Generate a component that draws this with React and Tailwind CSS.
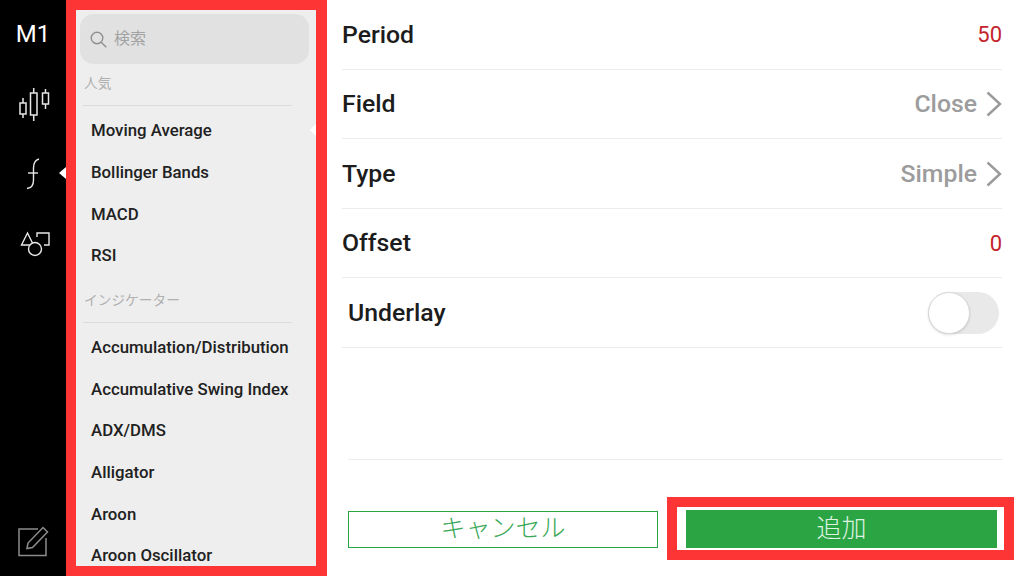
import React from 'react';

const popular = ['Moving Average', 'Bollinger Bands', 'MACD', 'RSI'];
const indicators = [
  'Accumulation/Distribution',
  'Accumulative Swing Index',
  'ADX/DMS',
  'Alligator',
  'Aroon',
  'Aroon Oscillator',
];

function Chevron() {
  return (
    <svg className="w-[16px] h-[26px] ml-[9px]" viewBox="0 0 16 26" fill="none" stroke="#9a9a9a" strokeWidth="2.4">
      <path d="M1.5 1.5 L14 13 L1.5 24.5" />
    </svg>
  );
}

function Row({ label, children }) {
  return (
    <div className="flex items-center justify-between h-[69.5px] pt-[0.5px] border-b border-[#ececec] text-[24.8px] font-medium text-[#1c1c1c]">
      <span>{label}</span>
      {children}
    </div>
  );
}

function MenuItem({ label }) {
  return <div className="flex items-center h-[41.7px] pl-[11px] text-[16.8px] font-medium text-[#212121] whitespace-nowrap">{label}</div>;
}

function Section({ label, children }) {
  return (
    <>
      <div className="mr-[24px] ml-[3px] h-[31px] flex items-center border-b border-[#dcdcdc] text-[13.7px] text-[#b0b0b0] box-content pb-[6px] mb-[4px]">
        <span className="pl-[1px]">{label}</span>
      </div>
      {children}
    </>
  );
}

function Sidebar() {
  return (
    <div className="w-[66px] h-full bg-black flex flex-col items-center relative text-white shrink-0">
      <div className="mt-[20px] text-[24px] leading-[28px] text-white">M1</div>
      <svg className="mt-[40px] ml-[2px] w-[32px] h-[34px]" viewBox="0 0 32 34" fill="none" stroke="#e8e8e8" strokeWidth="1.5">
        <rect x="2" y="15" width="6" height="11" />
        <path d="M5 10V15M5 26v4" />
        <rect x="12.5" y="5" width="6.5" height="22" />
        <path d="M15.7 0V5M15.7 27v6" />
        <rect x="24.5" y="5" width="6" height="11" />
        <path d="M27.5 1V5M27.5 16v5" />
      </svg>
      <svg className="mt-[36px] w-[20px] h-[32px]" viewBox="0 0 20 32" fill="none" stroke="#e8e8e8" strokeWidth="1.4">
        <path d="M16 1 C12 2 10.5 5 10.5 10 L10.5 22 C10.5 27 9 30 4 30.5" />
        <path d="M5 15 H15" />
      </svg>
      <svg className="mt-[41px] ml-[3px] w-[30px] h-[26px]" viewBox="0 0 30 26" fill="none" stroke="#e8e8e8" strokeWidth="1.4">
        <path d="M7.5 2 L13.5 14 H1.5 Z" />
        <path d="M17 6 V2 H29 V14 H24" />
        <circle cx="15" cy="18" r="6.5" fill="#000" />
      </svg>
      <svg className="mt-auto mb-[19px] ml-[1px] w-[31px] h-[31px]" viewBox="0 0 31 31" fill="none" stroke="#8c8c8c" strokeWidth="1.5">
        <path d="M20 3 H1 V29.5 H28 V12" />
        <path d="M9 22.5 L10 17 L25 1.5 L29.5 6 L14.5 21.5 Z" />
      </svg>
      <div className="absolute right-0 top-[167px] w-0 h-0 border-y-[6px] border-y-transparent border-r-[7px] border-r-white" />
    </div>
  );
}

function Menu() {
  return (
    <div className="w-[261px] h-full shrink-0 border-[10px] border-[#fd3535] border-r-[11px] bg-[#eeeeee] relative overflow-hidden pl-[4px] pt-[4px]">
      <div className="w-[229px] h-[50px] rounded-[14px] bg-[#e1e1e1] flex items-center pl-[10px] text-[#a3a3a3] text-[16px] mb-[4px]">
        <svg className="w-[17px] h-[17px] mr-[7px]" viewBox="0 0 17 17" fill="none" stroke="#8f8f8f" strokeWidth="1.4">
          <circle cx="7" cy="7" r="5.8" />
          <path d="M11.2 11.2 L16.3 16.3" />
        </svg>
        <span>検索</span>
      </div>
      <Section label="人気">
        {popular.map((p) => <MenuItem key={p} label={p} />)}
      </Section>
      <div className="mt-[8px]">
        <Section label="インジケーター">
          {indicators.map((p) => <MenuItem key={p} label={p} />)}
        </Section>
      </div>
      <div className="absolute right-0 top-[114px] w-0 h-0 border-y-[6px] border-y-transparent border-r-[6px] border-r-white" />
    </div>
  );
}

function Settings() {
  return (
    <div className="flex-1 h-full flex flex-col bg-white">
      <div className="pl-[15px] pr-[22px]">
        <Row label="Period"><span className="font-normal text-[22px] text-[#c5232c]">50</span></Row>
        <Row label="Field">
          <span className="flex items-center text-[#9c9c9c]">Close<Chevron /></span>
        </Row>
        <Row label="Type">
          <span className="flex items-center text-[#9c9c9c]">Simple<Chevron /></span>
        </Row>
        <Row label="Offset"><span className="font-normal text-[22px] text-[#c5232c]">0</span></Row>
        <Row label={<span className="pl-[6px]">Underlay</span>}>
          <div className="w-[71px] h-[42px] mr-[3px] rounded-full bg-[#e9e9e9] relative">
            <div className="absolute left-0 top-0 w-[42px] h-[42px] rounded-full bg-white border border-[#d8d8d8] shadow-sm" />
          </div>
        </Row>
      </div>
      <div className="ml-[21px] mr-[22px] mt-[111px] border-t border-[#ececec]" />
      <div className="flex items-center mt-[37px] pl-[21px]">
        <div className="w-[310px] h-[37px] mt-[2px] border border-[#2ba544] flex items-center justify-center text-[#3aa857] text-[25px] font-light">キャンセル</div>
        <div className="ml-[9px] w-[347px] h-[63px] border-[10px] border-[#fd3535] bg-white pl-[9px] pt-[3px] pb-[2px]">
          <div className="w-[311px] h-full bg-[#2ba544] flex items-center justify-center text-[#dff3e2] text-[25px] font-light">追加</div>
        </div>
      </div>
    </div>
  );
}

export default function App() {
  return (
    <div className="w-[1024px] h-[576px] flex overflow-hidden bg-white font-['Roboto','Noto_Sans_CJK_JP',sans-serif]">
      <Sidebar />
      <Menu />
      <Settings />
    </div>
  );
}
